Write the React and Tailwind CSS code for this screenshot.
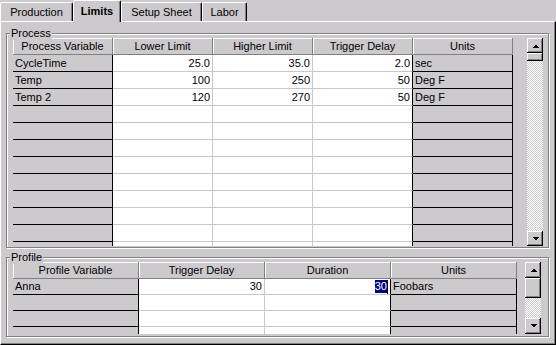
import React from "react";

const processCols = ["Process Variable", "Lower Limit", "Higher Limit", "Trigger Delay", "Units"];
const processRows = [
  ["CycleTime", "25.0", "35.0", "2.0", "sec"],
  ["Temp", "100", "250", "50", "Deg F"],
  ["Temp 2", "120", "270", "50", "Deg F"],
];
const profileCols = ["Profile Variable", "Trigger Delay", "Duration", "Units"];

const Arrow = ({ up }) => (
  <svg width="7" height="4" viewBox="0 0 7 4" shapeRendering="crispEdges">
    <polygon points={up ? "0,4 7,4 3.5,0.5" : "0,0 7,0 3.5,3.5"} fill="#000" />
  </svg>
);

const btn =
  "bg-[#cdcacd] shadow-[inset_-1px_-1px_0_#000,inset_1px_1px_0_#fff,inset_-2px_-2px_0_#808080]";

const ScrollBar = ({ btnH, thumbH }) => (
  <div className="w-[16px] h-full flex flex-col">
    <div className={`${btn} flex items-center justify-center`} style={{ height: btnH }}>
      <Arrow up />
    </div>
    <div className={btn} style={{ height: thumbH }} />
    <div className="flex-1 bg-[repeating-conic-gradient(#fff_0_25%,#cdcacd_0_50%)] bg-[length:2px_2px]" />
    <div className={`${btn} flex items-center justify-center`} style={{ height: btnH }}>
      <Arrow />
    </div>
  </div>
);

const Group = ({ title, className, children }) => (
  <div
    className={`relative border border-[#808080] shadow-[inset_1px_1px_0_#fff,1px_1px_0_#fff] ${className}`}
  >
    <span className="absolute left-[3px] top-[-7px] px-[1px] leading-[13px] bg-[#cdcacd]">{title}</span>
    {children}
  </div>
);

const Cell = ({ kind, last, w, h, children }) => {
  // kind: "label" (grey, left), "num" (white, right), "unit" (grey, left)
  const base = "shrink-0 border-b border-r px-[2px] overflow-hidden whitespace-nowrap flex items-center";
  let cls;
  if (kind === "label") cls = "bg-[#cdcacd] border-black justify-start";
  else if (kind === "unit") cls = "bg-[#cdcacd] border-black justify-start";
  else
    cls = last
      ? "bg-white border-b-[#c8c8c8] border-r-black justify-end"
      : "bg-white border-[#c8c8c8] justify-end";
  return (
    <div className={`${base} ${cls}`} style={{ width: w, height: h }}>
      {children}
    </div>
  );
};

const Table = ({ cols, rows, colW, headH, rowH, count, height }) => (
  <div className="overflow-hidden shrink-0" style={{ width: colW * cols.length, height }}>
    <div className="flex">
      {cols.map((c) => (
        <div
          key={c}
          className="shrink-0 border-r border-b border-[#808080] shadow-[inset_1px_1px_0_#fff] flex items-center justify-center whitespace-nowrap"
          style={{ width: colW, height: headH }}
        >
          {c}
        </div>
      ))}
    </div>
    {Array.from({ length: count }).map((_, r) => {
      const row = rows[r] || [];
      return (
        <div key={r} className="flex">
          {cols.map((c, i) => {
            const kind = i === 0 ? "label" : i === cols.length - 1 ? "unit" : "num";
            return (
              <Cell key={c} kind={kind} last={i === cols.length - 2} w={colW} h={rowH}>
                {row[i]}
              </Cell>
            );
          })}
        </div>
      );
    })}
  </div>
);

const tabs = [
  { label: "Production", w: 73 },
  { label: "Limits", w: 48, active: true },
  { label: "Setup Sheet", w: 81 },
  { label: "Labor", w: 45 },
];

export default function App() {
  const profileRows = [
    [
      "Anna",
      "30",
      <span key="d" className="flex items-center">
        <span className="bg-[#000080] text-white leading-[13px]">30</span>
        <span className="inline-block w-px h-[14px] bg-black" />
      </span>,
      "Foobars",
    ],
  ];

  return (
    <div className="w-[556px] h-[345px] overflow-hidden bg-[#cdcacd] text-black text-[11px] font-['Liberation_Sans',Arial,sans-serif] flex flex-col">
      <div className="flex items-end h-[21px] shrink-0">
        {tabs.map((t) => (
          <div
            key={t.label}
            className={`shrink-0 flex items-center justify-center rounded-t-[2px] border-t border-l border-white border-r border-r-black shadow-[inset_-1px_0_0_#808080] bg-[#cdcacd] ${
              t.active ? "h-[22px] mb-[-1px] relative z-10 font-bold" : "h-[19px]"
            }`}
            style={{ width: t.w }}
          >
            {t.label}
          </div>
        ))}
      </div>

      <div className="flex-1 border-t border-l border-white border-r border-r-black border-b border-b-black shadow-[inset_-1px_-1px_0_#808080] pl-[5px]">
        <Group title="Process" className="mt-[11px] w-[543px] h-[215px]">
          <div className="flex pl-[6px] pt-[4px]">
            <Table cols={processCols} rows={processRows} colW={100} headH={17} rowH={17} count={12} height={208} />
            <div className="ml-[14px] h-[208px]">
              <ScrollBar btnH={15} thumbH={8} />
            </div>
          </div>
        </Group>

        <Group title="Profile" className="mt-[9px] w-[543px] h-[80px]">
          <div className="flex pl-[6px] pt-[4px]">
            <Table cols={profileCols} rows={profileRows} colW={126} headH={17} rowH={16} count={4} height={72} />
            <div className="ml-[8px] h-[72px]">
              <ScrollBar btnH={16} thumbH={20} />
            </div>
          </div>
        </Group>
      </div>
    </div>
  );
}
